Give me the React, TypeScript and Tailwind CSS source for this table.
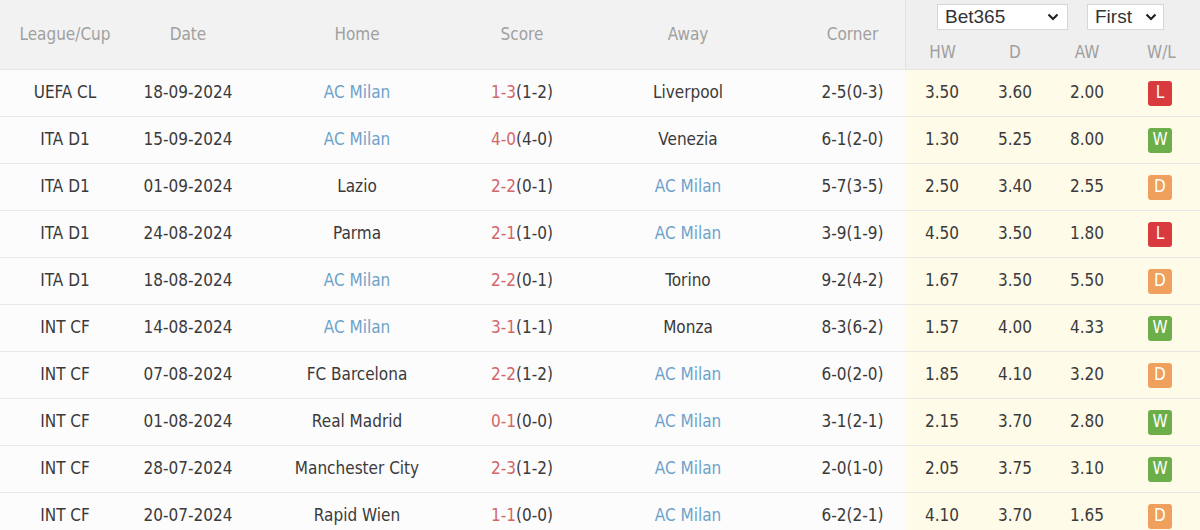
import React from "react";

type Match = {
  league: string;
  date: string;
  home: string;
  score: string;
  half: string;
  away: string;
  corner: string;
  hw: string;
  d: string;
  aw: string;
  res: "W" | "D" | "L";
};

const matches: Match[] = [
  { league: "UEFA CL", date: "18-09-2024", home: "AC Milan", score: "1-3", half: "(1-2)", away: "Liverpool", corner: "2-5(0-3)", hw: "3.50", d: "3.60", aw: "2.00", res: "L" },
  { league: "ITA D1", date: "15-09-2024", home: "AC Milan", score: "4-0", half: "(4-0)", away: "Venezia", corner: "6-1(2-0)", hw: "1.30", d: "5.25", aw: "8.00", res: "W" },
  { league: "ITA D1", date: "01-09-2024", home: "Lazio", score: "2-2", half: "(0-1)", away: "AC Milan", corner: "5-7(3-5)", hw: "2.50", d: "3.40", aw: "2.55", res: "D" },
  { league: "ITA D1", date: "24-08-2024", home: "Parma", score: "2-1", half: "(1-0)", away: "AC Milan", corner: "3-9(1-9)", hw: "4.50", d: "3.50", aw: "1.80", res: "L" },
  { league: "ITA D1", date: "18-08-2024", home: "AC Milan", score: "2-2", half: "(0-1)", away: "Torino", corner: "9-2(4-2)", hw: "1.67", d: "3.50", aw: "5.50", res: "D" },
  { league: "INT CF", date: "14-08-2024", home: "AC Milan", score: "3-1", half: "(1-1)", away: "Monza", corner: "8-3(6-2)", hw: "1.57", d: "4.00", aw: "4.33", res: "W" },
  { league: "INT CF", date: "07-08-2024", home: "FC Barcelona", score: "2-2", half: "(1-2)", away: "AC Milan", corner: "6-0(2-0)", hw: "1.85", d: "4.10", aw: "3.20", res: "D" },
  { league: "INT CF", date: "01-08-2024", home: "Real Madrid", score: "0-1", half: "(0-0)", away: "AC Milan", corner: "3-1(2-1)", hw: "2.15", d: "3.70", aw: "2.80", res: "W" },
  { league: "INT CF", date: "28-07-2024", home: "Manchester City", score: "2-3", half: "(1-2)", away: "AC Milan", corner: "2-0(1-0)", hw: "2.05", d: "3.75", aw: "3.10", res: "W" },
  { league: "INT CF", date: "20-07-2024", home: "Rapid Wien", score: "1-1", half: "(0-0)", away: "AC Milan", corner: "6-2(2-1)", hw: "4.10", d: "3.70", aw: "1.65", res: "D" },
];

const cols = "grid grid-cols-[130px_116px_222px_108px_224px_105px_74px_72px_72px_77px]";

const badgeColor: Record<Match["res"], string> = {
  W: "bg-[#6cae4a]",
  D: "bg-[#efa05c]",
  L: "bg-[#d93a3f]",
};

function Chevron() {
  return (
    <svg width="12" height="8" viewBox="0 0 12 8" className="shrink-0">
      <path d="M1.5 1.5 L6 6 L10.5 1.5" fill="none" stroke="#222" strokeWidth="2.2" />
    </svg>
  );
}

function Team({ name }: { name: string }) {
  return (
    <div className={`flex items-center justify-center ${name === "AC Milan" ? "text-[#6ea2ca]" : ""}`}>
      {name}
    </div>
  );
}

export default function App() {
  return (
    <div className="w-[1200px] h-[530px] overflow-hidden bg-white text-[#3a3a3a] font-['DejaVu_Sans_Condensed','DejaVu_Sans',sans-serif] font-stretch-condensed text-[17px]">
      <div className={`${cols} h-[70px] bg-[#f2f2f2] text-[#a0a0a0] border-b border-[#e6e6e6]`}>
        <div className="flex items-center justify-center pt-[1px]">League/Cup</div>
        <div className="flex items-center justify-center pt-[1px]">Date</div>
        <div className="flex items-center justify-center pt-[1px]">Home</div>
        <div className="flex items-center justify-center pt-[1px]">Score</div>
        <div className="flex items-center justify-center pt-[1px]">Away</div>
        <div className="flex items-center justify-center pt-[1px]">Corner</div>
        <div className="col-span-4 flex flex-col border-l border-[#e2e2e2] bg-[#efefef]">
          <div className="flex h-[34px] items-start pt-[4px] pl-[31px] gap-[19px] font-['Liberation_Sans',sans-serif] text-[19px] text-[#333]">
            <div className="flex h-[26px] w-[131px] items-center justify-between border border-[#d6d6d6] bg-white pl-[7px] pr-[8px]">
              <span>Bet365</span>
              <Chevron />
            </div>
            <div className="flex h-[26px] w-[77px] items-center justify-between border border-[#d6d6d6] bg-white pl-[7px] pr-[6px]">
              <span>First</span>
              <Chevron />
            </div>
          </div>
          <div className="grid grid-cols-[73px_72px_72px_77px] flex-1 items-center pt-[3px]">
            <div className="text-center">HW</div>
            <div className="text-center">D</div>
            <div className="text-center">AW</div>
            <div className="text-center">W/L</div>
          </div>
        </div>
      </div>
      {matches.map((m, i) => (
        <div key={i} className={`${cols} h-[47px] border-b border-[#e8e8e8] bg-[#fcfcfc]`}>
          <div className="flex items-center justify-center">{m.league}</div>
          <div className="flex items-center justify-center">{m.date}</div>
          <Team name={m.home} />
          <div className="flex items-center justify-center">
            <span className="text-[#d2666b]">{m.score}</span>
            <span>{m.half}</span>
          </div>
          <Team name={m.away} />
          <div className="flex items-center justify-center">{m.corner}</div>
          <div className="col-span-4 grid grid-cols-[74px_72px_72px_77px] bg-[#fffbe9]">
            <div className="flex items-center justify-center">{m.hw}</div>
            <div className="flex items-center justify-center">{m.d}</div>
            <div className="flex items-center justify-center">{m.aw}</div>
            <div className="flex items-center justify-center pr-[3px]">
              <span className={`flex h-[25px] w-[24px] items-center justify-center rounded-[3px] text-[17px] text-white ${badgeColor[m.res]}`}>
                {m.res}
              </span>
            </div>
          </div>
        </div>
      ))}
    </div>
  );
}
